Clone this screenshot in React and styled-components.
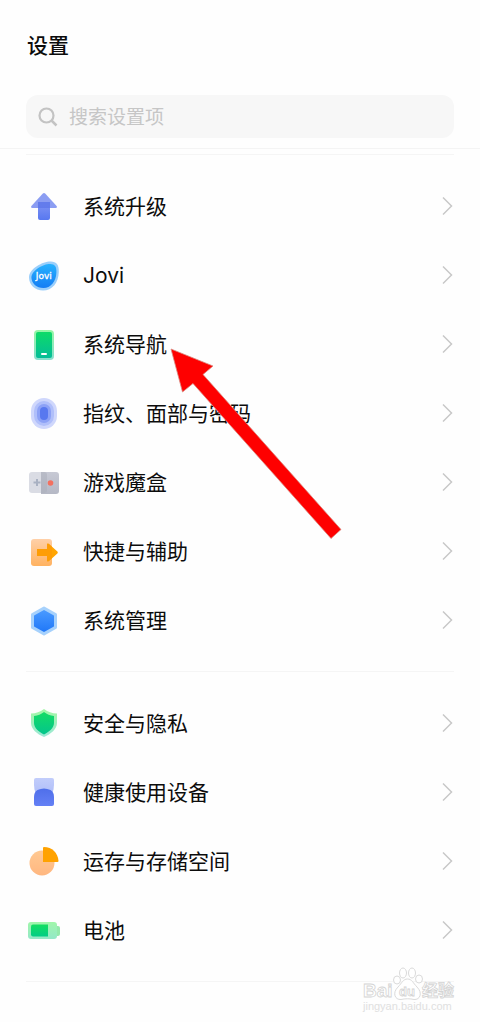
import { useState } from "react";
import styled, { createGlobalStyle } from "styled-components";

const GlobalStyle = createGlobalStyle`
  * {
    box-sizing: border-box;
  }

  body {
    margin: 0;
    background-color: #fefefe;
    color: #0c0c0c;
    font-family: Inter, "Noto Sans CJK SC", sans-serif;
  }
`;

const Page = styled.div`
  position: relative;
  min-height: 100vh;
  overflow: hidden;
`;

const Header = styled.header`
  padding: 32px 26px 10px;
  border-bottom: 1px solid #f4f4f4;

  & h1 {
    margin: 0;
    padding-left: 1px;
    font-size: 21px;
    font-weight: 500;
    line-height: 28px;
  }
`;

const SearchBox = styled.label`
  display: flex;
  align-items: center;
  gap: 11px;
  height: 43px;
  margin-top: 35px;
  padding: 0 12px;
  border-radius: 12px;
  background-color: #f7f7f7;

  & input {
    flex: 1;
    min-width: 0;
    padding: 3px 0 0;
    border: 0;
    background: none;
    color: inherit;
    font-family: inherit;
    font-size: 19px;
    line-height: 28px;
  }

  & input:focus {
    outline: none;
  }

  & input::placeholder {
    color: #c6c6c6;
    opacity: 1;
  }
`;

const List = styled.main`
  padding: 5px 26px 0;
`;

const Group = styled.ul`
  margin: 0;
  padding: 17px 0 16px;
  border-top: 1px solid #f5f5f5;
  list-style: none;

  &:last-child {
    border-bottom: 1px solid #f5f5f5;
  }
`;

const Row = styled.a`
  display: flex;
  align-items: center;
  height: 69px;
  padding: 0 1px 0 2px;
  color: inherit;
  text-decoration: none;

  & .label {
    flex: 1;
    margin-left: 23px;
    font-size: 21px;
    line-height: 30px;
  }
`;

const Icon = styled.svg`
  flex: none;
  display: block;
  width: ${(props) => props.$width || 32}px;
  height: ${(props) => props.$height || 32}px;
`;

const PointerArrow = styled.svg`
  position: absolute;
  top: 347px;
  left: 169px;
  width: 175px;
  height: 194px;
  pointer-events: none;
`;

const Watermark = styled.svg`
  position: absolute;
  right: 24px;
  bottom: 8px;
  width: 96px;
  height: 50px;
  pointer-events: none;
`;

const Gradient = ({ id, from, to }) => (
  <linearGradient id={id} x1="0" y1="0" x2="0" y2="1">
    <stop offset="0" stopColor={from} />
    <stop offset="1" stopColor={to} />
  </linearGradient>
);

const UpgradeIcon = () => (
  <Icon viewBox="0 0 32 32">
    <Gradient id="upgrade" from="#8295f4" to="#5878f0" />
    <path d="M10 11h12v16a2 2 0 0 1-2 2h-8a2 2 0 0 1-2-2z" fill="url(#upgrade)" />
    <path
      d="M14.6 2.8Q16 1.4 17.4 2.8L28.6 15Q29.6 16.8 27.6 17H4.4Q2.4 16.8 3.4 15z"
      fill="#7188ef"
      fillOpacity="0.82"
    />
    <path d="M10 11h12v6H10z" fill="#5873ea" fillOpacity="0.6" />
  </Icon>
);

const JoviIcon = () => (
  <Icon viewBox="0 0 32 32">
    <Gradient id="jovi" from="#27b2ff" to="#147df4" />
    <path
      d="M21 1.500C28 .8 31 4 30.800 12C30.500 23 24 30.500 15 30.500C7 30.500 1 25 1 17C1 10 12 2.500 21 1.500z"
      fill="#9bcffb"
    />
    <path
      d="M20.500 4C26.500 3.300 28.600 6 28.400 12.500C28 22 22.500 28 15.500 28C8.500 28 3.400 23.500 3.400 17C3.400 11.500 13 5 20.500 4z"
      fill="url(#jovi)"
    />
    <text
      x="15.800"
      y="19"
      fill="#fff"
      fontFamily="DejaVu Sans, sans-serif"
      fontSize="9"
      stroke="#fff"
      strokeWidth="0.300"
      textAnchor="middle"
    >
      Jovi
    </text>
  </Icon>
);

const NavigationIcon = () => (
  <Icon viewBox="0 0 32 32">
    <Gradient id="navOuter" from="#97f6a6" to="#88dfce" />
    <Gradient id="navInner" from="#0edb68" to="#04bd98" />
    <rect x="6" y="1" width="20" height="30" rx="4" fill="url(#navOuter)" />
    <rect x="8" y="3" width="16" height="26" rx="2" fill="url(#navInner)" />
    <rect x="13" y="24" width="6" height="2" rx="1" fill="#fff" />
  </Icon>
);

const FingerprintIcon = () => (
  <Icon viewBox="0 0 32 32">
    <rect x="3" y="0" width="26" height="31" rx="13" fill="#cfd7fc" />
    <rect x="6" y="3" width="20" height="25" rx="10" fill="#b0bffa" />
    <rect x="9" y="6" width="14" height="19" rx="7" fill="#8ca1f6" />
    <rect x="12" y="9" width="8" height="13" rx="4" fill="#5878ef" />
  </Icon>
);

const GameIcon = () => (
  <Icon viewBox="0 0 32 32">
    <Gradient id="gameRight" from="#c7c9d4" to="#b5b8c5" />
    <rect x="1" y="5" width="18" height="21" rx="3" fill="#dadce4" />
    <path d="M13 5h15a3 3 0 0 1 3 3v16a3 3 0 0 1-3 3H13z" fill="url(#gameRight)" />
    <path d="M13 5h3a3 3 0 0 1 3 3v15a3 3 0 0 1-3 3h-3z" fill="#a9adba" fillOpacity="0.5" />
    <path d="M9 12v7M5.5 15.5h7" stroke="#a9b1c2" strokeWidth="2" />
    <circle cx="22.5" cy="16" r="2.8" fill="#f3705f" />
  </Icon>
);

const ShortcutIcon = () => (
  <Icon viewBox="0 0 32 32">
    <Gradient id="shortcut" from="#ffd0a8" to="#ffb260" />
    <rect x="3" y="3" width="21" height="27" rx="3" fill="url(#shortcut)" />
    <path
      d="M9 13h10V8.600q.4-1.800 2-.6l8.400 7.400q.9 1.100 0 2.200L21 25q-1.600 1.200-2-.6V20H9z"
      fill="#ffa502"
    />
    <path d="M9 13h10V8.600q.4-1.800 2-.6l3 2.700v11.600L21 25q-1.600 1.200-2-.6V20H9z" fill="#fd9709" fillOpacity="0.6" />
  </Icon>
);

const ManageIcon = () => (
  <Icon viewBox="0 0 32 32">
    <Gradient id="manage" from="#4899ff" to="#2279f8" />
    <path
      d="M16 3L27.5 9.5V22.5L16 29L4.500 22.500V9.500z"
      fill="#a6d1fc"
      stroke="#a6d1fc"
      strokeWidth="3"
      strokeLinejoin="round"
    />
    <path
      d="M16 6L25 11V21L16 26L7 21V11z"
      fill="url(#manage)"
      stroke="url(#manage)"
      strokeWidth="2"
      strokeLinejoin="round"
    />
  </Icon>
);

const SecurityIcon = () => (
  <Icon viewBox="0 0 32 32">
    <Gradient id="shieldOuter" from="#a3f7a5" to="#9de8d7" />
    <Gradient id="shieldInner" from="#14dc65" to="#03c58c" />
    <path
      d="M16 1C20 4 24 5.300 29 5.500V15C29 21 23 26 16 29C9 26 3 21 3 15V5.500C8 5.300 12 4 16 1z"
      fill="url(#shieldOuter)"
    />
    <path
      d="M16 4C19 6.500 22 7.600 26 8V15C26 20 21 24 16 26.500C11 24 6 20 6 15V8C10 7.600 13 6.500 16 4z"
      fill="url(#shieldInner)"
    />
  </Icon>
);

const HealthIcon = () => (
  <Icon viewBox="0 0 32 32">
    <Gradient id="healthTop" from="#c2cdfb" to="#adbcf9" />
    <Gradient id="healthBottom" from="#4f6fea" to="#6480f5" />
    <path
      d="M8 1H24Q26 1 26 3V8Q26 13 24 16Q16 22 8 16Q6 13 6 8V3Q6 1 8 1z"
      fill="url(#healthTop)"
    />
    <path
      d="M6 20Q6 15 9.500 13Q16 10 22.500 13Q26 15 26 20V27Q26 29 24 29H8Q6 29 6 27z"
      fill="url(#healthBottom)"
    />
  </Icon>
);

const StorageIcon = () => (
  <Icon viewBox="0 0 32 32">
    <Gradient id="storage" from="#ffc992" to="#ffb780" />
    <circle cx="14" cy="17" r="12.500" fill="url(#storage)" />
    <path d="M15 2Q15 1 16 1C24 1 30 7 30.500 15Q30.500 16 29.500 16H15z" fill="#ffa200" />
  </Icon>
);

const BatteryIcon = () => (
  <Icon viewBox="0 0 32 32">
    <Gradient id="batteryOuter" from="#a0f6aa" to="#94e8c8" />
    <Gradient id="batteryInner" from="#13de60" to="#02cd86" />
    <path d="M27 11h3q2 0 2 2v6q0 2-2 2h-3z" fill="#94e9ab" />
    <rect x="0" y="7" width="29" height="17" rx="3" fill="url(#batteryOuter)" />
    <path d="M5 9.500H20V21.500H5Q3 21.500 3 19.500V11.500Q3 9.500 5 9.500z" fill="url(#batteryInner)" />
  </Icon>
);

const Chevron = () => (
  <Icon $width={12} $height={20} viewBox="0 0 12 20">
    <path d="M2 .5L10.500 9L2 17.500" fill="none" stroke="#c8c8c8" strokeWidth="1.500" />
  </Icon>
);

const groups = [
  [
    { label: "系统升级", icon: UpgradeIcon },
    { label: "Jovi", icon: JoviIcon },
    { label: "系统导航", icon: NavigationIcon },
    { label: "指纹、面部与密码", icon: FingerprintIcon },
    { label: "游戏魔盒", icon: GameIcon },
    { label: "快捷与辅助", icon: ShortcutIcon },
    { label: "系统管理", icon: ManageIcon },
  ],
  [
    { label: "安全与隐私", icon: SecurityIcon },
    { label: "健康使用设备", icon: HealthIcon },
    { label: "运存与存储空间", icon: StorageIcon },
    { label: "电池", icon: BatteryIcon },
  ],
];

const App = () => {
  const [keyword, setKeyword] = useState("");

  const keywordChangeHandler = (event) => {
    setKeyword(event.target.value);
  };

  return (
    <Page>
      <GlobalStyle />
      <Header>
        <h1>设置</h1>
        <SearchBox htmlFor="search">
          <Icon $width={20} $height={20} viewBox="0 0 20 20">
            <circle cx="8.500" cy="8.500" r="7" fill="none" stroke="#c3c3c3" strokeWidth="2.200" />
            <path d="M13.500 13.500L18.500 18.500" stroke="#c3c3c3" strokeWidth="2.500" />
          </Icon>
          <input
            type="text"
            id="search"
            value={keyword}
            onChange={keywordChangeHandler}
            placeholder="搜索设置项"
            aria-label="搜索设置项"
          />
        </SearchBox>
      </Header>
      <List>
        {groups.map((items, index) => (
          <Group key={index}>
            {items.map(({ label, icon: ItemIcon }) => (
              <li key={label}>
                <Row href="#">
                  <ItemIcon />
                  <span className="label">{label}</span>
                  <Chevron />
                </Row>
              </li>
            ))}
          </Group>
        ))}
      </List>
      <PointerArrow viewBox="0 0 175 194">
        <path
          d="M2 2L44 19L34 27.500L172 182.500L162 191.500L24 36.500L13.500 45z"
          fill="#fe0000"
          stroke="#d98a80"
          strokeWidth="0.800"
        />
      </PointerArrow>
      <Watermark viewBox="0 0 96 50">
        <g fill="#fff" stroke="#dadada" strokeWidth="1">
          <ellipse cx="37" cy="16" rx="3.500" ry="4" />
          <ellipse cx="43" cy="9" rx="3.500" ry="5" />
          <ellipse cx="52" cy="9" rx="3.500" ry="5" />
          <ellipse cx="59" cy="15" rx="3.500" ry="4" />
          <path d="M47.500 15C52 15 53 19 57 23C63 29 60 36 54 35.500C50 34.500 45 34.500 41 35.500C35 36 32 29 38 23C42 19 43 15 47.500 15z" />
        </g>
        <g
          fill="#fff"
          stroke="#d4d4d4"
          strokeWidth="0.800"
          fontFamily="Liberation Sans, Noto Sans CJK SC, sans-serif"
          fontWeight="bold"
        >
          <text x="3" y="33" fontSize="19">Bai</text>
          <text x="39" y="32" fontSize="13">du</text>
          <text x="62" y="32" fontSize="16">经验</text>
        </g>
        <text x="3" y="46" fontSize="11" fill="#e0e0e0" fontFamily="Liberation Sans, sans-serif">
          jingyan.baidu.com
        </text>
      </Watermark>
    </Page>
  );
};

export default App;
